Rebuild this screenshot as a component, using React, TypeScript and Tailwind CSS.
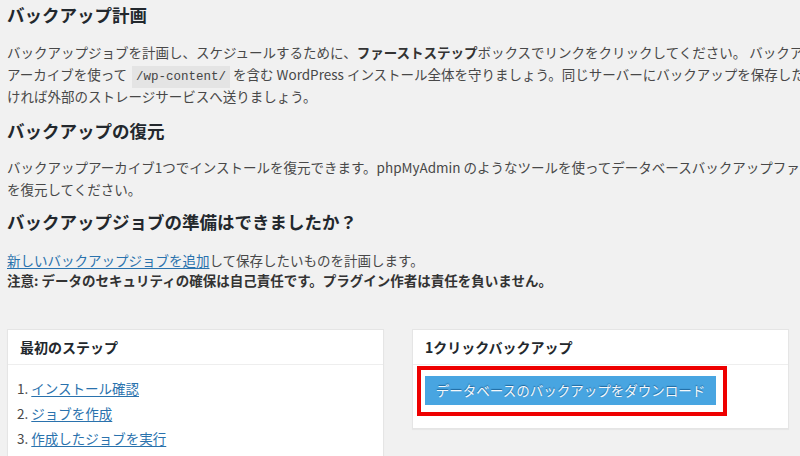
import React from "react";

const font = { fontFamily: "'Noto Sans CJK JP', 'Open Sans', sans-serif" };

export default function App() {
  return (
    <div
      className="w-[800px] h-[456px] overflow-hidden bg-[#f1f1f1] text-[#484848] pl-[7px]"
      style={font}
    >
      <div className="w-[900px]">
        <h1 className="pt-[3px] text-[17.5px] leading-[24px] font-bold text-[#23282d]">
          バックアップ計画
        </h1>
        <p className="mt-[14px] text-[13.5px] leading-[22px] whitespace-nowrap">
          バックアップジョブを計画し、スケジュールするために、
          <b className="text-[#333]">ファーストステップ</b>
          ボックスでリンクをクリックしてください。 バックアップ
          <br />
          アーカイブを使って{" "}
          <code
            className="ml-[2px] bg-[#e4e4e4] px-[4px] py-[4px] text-[12.5px] leading-none text-[#444]"
            style={{ fontFamily: "'Liberation Mono', 'DejaVu Sans Mono', monospace" }}
          >
            /wp-content/
          </code>{" "}
          を含む WordPress インストール全体を守りましょう。同じサーバーにバックアップを保存したくな
          <br />
          ければ外部のストレージサービスへ送りましょう。
        </p>
        <h2 className="mt-[12px] text-[17.5px] leading-[24px] font-bold text-[#23282d]">
          バックアップの復元
        </h2>
        <p className="mt-[13px] text-[13.5px] leading-[22px] whitespace-nowrap">
          バックアップアーカイブ1つでインストールを復元できます。phpMyAdmin のようなツールを使ってデータベースバックアップファイル
          <br />
          を復元してください。
        </p>
        <h2 className="mt-[10px] text-[17.5px] leading-[24px] font-bold text-[#23282d]">
          バックアップジョブの準備はできましたか？
        </h2>
        <div className="mt-[16px] text-[13.5px] leading-[20px] whitespace-nowrap">
          <p>
            <a href="#" className="text-[#2a72ad] underline underline-offset-2">
              新しいバックアップジョブを追加
            </a>
            して保存したいものを計画します。
          </p>
          <p className="font-bold text-[#333]">
            注意: データのセキュリティの確保は自己責任です。プラグイン作者は責任を負いません。
          </p>
        </div>
      </div>

      <div className="mt-[39px] grid grid-cols-2 gap-[28px] w-[782px] items-start">
        <div className="bg-white border border-[#e5e5e5] shadow-[0_1px_1px_rgba(0,0,0,0.04)]">
          <div className="h-[35px] flex items-center px-[12px] border-b border-[#eee] text-[14px] font-bold text-[#23282d]">
            最初のステップ
          </div>
          <ol className="pt-[11px] pb-[8px] px-[9px] text-[13.5px] leading-[25px]">
            <li>
              1.{" "}
              <a href="#" className="text-[#2a72ad] underline underline-offset-2">
                インストール確認
              </a>
            </li>
            <li>
              2.{" "}
              <a href="#" className="text-[#2a72ad] underline underline-offset-2">
                ジョブを作成
              </a>
            </li>
            <li>
              3.{" "}
              <a href="#" className="text-[#2a72ad] underline underline-offset-2">
                作成したジョブを実行
              </a>
            </li>
            <li>
              4.{" "}
              <a href="#" className="text-[#2a72ad] underline underline-offset-2">
                ジョブのログを確認
              </a>
            </li>
          </ol>
        </div>

        <div className="bg-white border border-[#e5e5e5] shadow-[0_1px_1px_rgba(0,0,0,0.04)]">
          <div className="h-[35px] flex items-center px-[12px] border-b border-[#eee] text-[14px] font-bold text-[#23282d]">
            1クリックバックアップ
          </div>
          <div className="pt-[11px] pb-[23px] px-[12px]">
            <div className="relative inline-block">
              <button
                className="h-[29px] w-[291px] bg-[#48a5e1] text-[#f4f8fb] text-[13.5px] leading-[29px] text-center [text-shadow:0_-1px_1px_rgba(0,60,110,0.6)]"
                style={font}
              >
                データベースのバックアップをダウンロード
              </button>
              <div className="absolute -left-[8px] -top-[10px] -right-[11px] -bottom-[11px] border-4 border-[#ee0000] pointer-events-none" />
            </div>
          </div>
        </div>
      </div>
    </div>
  );
}
